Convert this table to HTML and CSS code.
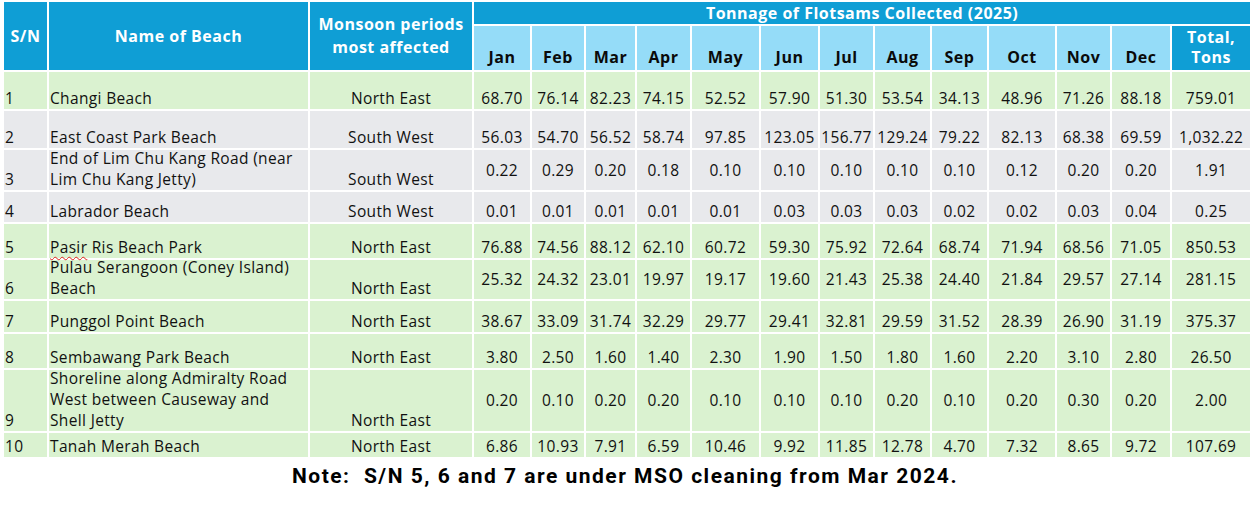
FILE: index.html
```html
<!DOCTYPE html>
<html lang="en">
<head>
<meta charset="utf-8">
<title>Tonnage of Flotsams Collected (2025)</title>
<link rel="stylesheet" href="styles.css">
</head>
<body>
<div class="page">
<table class="flot">
  <colgroup>
    <col class="c-sn"><col class="c-name"><col class="c-mon">
    <col class="c-jan"><col class="c-feb"><col class="c-mar"><col class="c-apr">
    <col class="c-may"><col class="c-jun"><col class="c-jul"><col class="c-aug">
    <col class="c-sep"><col class="c-oct"><col class="c-nov"><col class="c-dec">
    <col class="c-tot">
  </colgroup>
  <thead>
    <tr class="h1">
      <th rowspan="2" class="dark">S/N</th>
      <th rowspan="2" class="dark">Name of Beach</th>
      <th rowspan="2" class="dark mon">Monsoon periods<br>most affected</th>
      <th colspan="13" class="dark band">Tonnage of Flotsams Collected (2025)</th>
    </tr>
    <tr class="h2">
      <th class="light">Jan</th><th class="light">Feb</th><th class="light">Mar</th><th class="light">Apr</th>
      <th class="light">May</th><th class="light">Jun</th><th class="light">Jul</th><th class="light">Aug</th>
      <th class="light">Sep</th><th class="light">Oct</th><th class="light">Nov</th><th class="light">Dec</th>
      <th class="dark total">Total,<br>Tons</th>
    </tr>
  </thead>
  <tbody>
    <tr class="green r1">
      <td class="sn">1</td><td class="name">Changi Beach</td><td class="mon">North East</td>
      <td>68.70</td><td>76.14</td><td>82.23</td><td>74.15</td><td>52.52</td><td>57.90</td><td>51.30</td><td>53.54</td><td>34.13</td><td>48.96</td><td>71.26</td><td>88.18</td><td>759.01</td>
    </tr>
    <tr class="grey r2">
      <td class="sn">2</td><td class="name">East Coast Park Beach</td><td class="mon">South West</td>
      <td>56.03</td><td>54.70</td><td>56.52</td><td>58.74</td><td>97.85</td><td>123.05</td><td>156.77</td><td>129.24</td><td>79.22</td><td>82.13</td><td>68.38</td><td>69.59</td><td>1,032.22</td>
    </tr>
    <tr class="grey r3 mid">
      <td class="sn">3</td><td class="name"><div class="wrap">End of Lim Chu Kang Road (near<br>Lim Chu Kang Jetty)</div></td><td class="mon">South West</td>
      <td>0.22</td><td>0.29</td><td>0.20</td><td>0.18</td><td>0.10</td><td>0.10</td><td>0.10</td><td>0.10</td><td>0.10</td><td>0.12</td><td>0.20</td><td>0.20</td><td>1.91</td>
    </tr>
    <tr class="grey r4">
      <td class="sn">4</td><td class="name">Labrador Beach</td><td class="mon">South West</td>
      <td>0.01</td><td>0.01</td><td>0.01</td><td>0.01</td><td>0.01</td><td>0.03</td><td>0.03</td><td>0.03</td><td>0.02</td><td>0.02</td><td>0.03</td><td>0.04</td><td>0.25</td>
    </tr>
    <tr class="green r5">
      <td class="sn">5</td><td class="name"><span class="spell">Pasir</span> Ris Beach Park</td><td class="mon">North East</td>
      <td>76.88</td><td>74.56</td><td>88.12</td><td>62.10</td><td>60.72</td><td>59.30</td><td>75.92</td><td>72.64</td><td>68.74</td><td>71.94</td><td>68.56</td><td>71.05</td><td>850.53</td>
    </tr>
    <tr class="green r6 mid">
      <td class="sn">6</td><td class="name"><div class="wrap">Pulau Serangoon (Coney Island)<br>Beach</div></td><td class="mon">North East</td>
      <td>25.32</td><td>24.32</td><td>23.01</td><td>19.97</td><td>19.17</td><td>19.60</td><td>21.43</td><td>25.38</td><td>24.40</td><td>21.84</td><td>29.57</td><td>27.14</td><td>281.15</td>
    </tr>
    <tr class="green r7">
      <td class="sn">7</td><td class="name">Punggol Point Beach</td><td class="mon">North East</td>
      <td>38.67</td><td>33.09</td><td>31.74</td><td>32.29</td><td>29.77</td><td>29.41</td><td>32.81</td><td>29.59</td><td>31.52</td><td>28.39</td><td>26.90</td><td>31.19</td><td>375.37</td>
    </tr>
    <tr class="green r8">
      <td class="sn">8</td><td class="name">Sembawang Park Beach</td><td class="mon">North East</td>
      <td>3.80</td><td>2.50</td><td>1.60</td><td>1.40</td><td>2.30</td><td>1.90</td><td>1.50</td><td>1.80</td><td>1.60</td><td>2.20</td><td>3.10</td><td>2.80</td><td>26.50</td>
    </tr>
    <tr class="green r9 mid">
      <td class="sn">9</td><td class="name"><div class="wrap">Shoreline along Admiralty Road<br>West between Causeway and<br>Shell Jetty</div></td><td class="mon">North East</td>
      <td>0.20</td><td>0.10</td><td>0.20</td><td>0.20</td><td>0.10</td><td>0.10</td><td>0.10</td><td>0.20</td><td>0.10</td><td>0.20</td><td>0.30</td><td>0.20</td><td>2.00</td>
    </tr>
    <tr class="green r10">
      <td class="sn">10</td><td class="name">Tanah Merah Beach</td><td class="mon">North East</td>
      <td>6.86</td><td>10.93</td><td>7.91</td><td>6.59</td><td>10.46</td><td>9.92</td><td>11.85</td><td>12.78</td><td>4.70</td><td>7.32</td><td>8.65</td><td>9.72</td><td>107.69</td>
    </tr>
  </tbody>
</table>
<p class="note">Note:&nbsp; S/N 5, 6 and 7 are under MSO cleaning from Mar 2024.</p>
</div>
</body>
</html>
```
FILE: styles.css
```css
html, body {
  margin: 0;
  padding: 0;
  background: #ffffff;
}
.page {
  width: 1250px;
}
.flot {
  margin-left: 2px;
  width: 1248px;
  table-layout: fixed;
  border-collapse: collapse;
  font-family: "Open Sans", "Liberation Sans", sans-serif;
  font-size: 15.5px;
  letter-spacing: 0.35px;
  color: #111;
}
.flot th, .flot td {
  border: 2px solid #ffffff;
  padding: 0;
  white-space: nowrap;
}
.c-sn { width: 45px; }
.c-name { width: 261px; }
.c-mon { width: 164px; }
.c-jan { width: 58px; }
.c-feb { width: 54px; }
.c-mar { width: 51px; }
.c-apr { width: 55px; }
.c-may { width: 69px; }
.c-jun { width: 59px; }
.c-jul { width: 55px; }
.c-aug { width: 57px; }
.c-sep { width: 57px; }
.c-oct { width: 68px; }
.c-nov { width: 55px; }
.c-dec { width: 60px; }
.c-tot { width: 80px; }

.flot th {
  font-weight: 700;
  font-size: 16px;
  letter-spacing: 0.5px;
  line-height: 22px;
  text-align: center;
  vertical-align: middle;
}
.dark {
  background: #0f9ed5;
  color: #ffffff;
}
.light {
  background: #95dcf8;
  color: #0a0a0a;
}
.flot th.light, .flot th.total {
  vertical-align: bottom;
  padding-bottom: 3px;
  line-height: 20px;
}
.flot th.mon {
  line-height: 23px;
}
.h1 { height: 23px; }
.h2 { height: 46px; }

.flot td {
  text-align: center;
  vertical-align: bottom;
  line-height: 21px;
}
.flot td.sn {
  text-align: left;
  padding-left: 1px;
}
.flot td.name {
  text-align: left;
  padding-left: 1px;
}
.wrap {
  margin-top: -4px;
}
.mid td { vertical-align: middle; }
.mid td.sn, .mid td.name, .mid td.mon { vertical-align: bottom; }

.green td { background: #daf2d0; }
.grey td { background: #e8e9ec; }

.r1 { height: 39px; }
.r2 { height: 39px; }
.r3 { height: 42px; }
.r4 { height: 32px; }
.r5 { height: 36px; }
.r6 { height: 41px; }
.r7 { height: 33px; }
.r8 { height: 36px; }
.r9 { height: 63px; }
.r10 { height: 26px; }

.spell {
  text-decoration: underline wavy #e0201a;
  text-decoration-thickness: 1px;
  text-underline-offset: 3px;
}

.note {
  margin: 5px 0 0;
  text-align: center;
  font-family: Roboto, "Liberation Sans", sans-serif;
  font-weight: 700;
  font-size: 21px;
  letter-spacing: 1.5px;
  color: #000;
}
```
